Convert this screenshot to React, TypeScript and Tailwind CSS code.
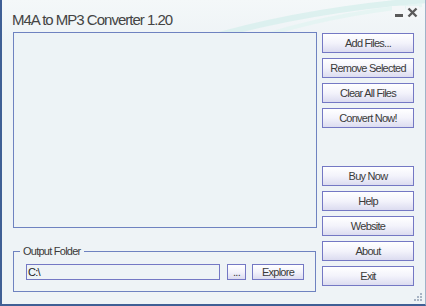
import React from "react";

const btn =
  "flex items-center justify-center border border-[#7478c4] bg-gradient-to-b from-[#ffffff] via-[#f3f3fb] to-[#dcdcf0] text-[#3a3a3a] text-[11px] tracking-[-0.75px] leading-none";

function Btn({ label }: { label: string }) {
  return <div className={`${btn} h-[20px] w-[92px]`}>{label}</div>;
}

export default function App() {
  return (
    <div
      className="relative w-[426px] h-[306px] overflow-hidden bg-[#eef3f6] border-l-2 border-b-2 border-[#3f5f95] border-r border-r-[#9fb3c8]"
      style={{ fontFamily: '"Liberation Sans", Arial, sans-serif' }}
    >
      {/* title bar background */}
      <div className="absolute inset-x-0 top-0 h-[40px] bg-gradient-to-b from-[#f4f8f9] to-[#eef3f6]" />
      <svg className="absolute left-0 top-0" width="426" height="40">
        <path d="M200 40 Q 300 10 426 0" stroke="#d7efec" strokeWidth="6" fill="none" opacity="0.8" />
        <path d="M250 40 Q 320 15 420 5" stroke="#e2f4f1" strokeWidth="4" fill="none" opacity="0.8" />
      </svg>

      <div className="relative flex h-[30px] items-start justify-between">
        <div className="pl-[10px] pt-[11px] text-[15px] leading-[18px] tracking-[-1px] text-[#444]">
          M4A to MP3 Converter 1.20
        </div>
        <div className="flex gap-[1px] pr-[6px] pt-[6px]">
          <div className="flex h-[13px] w-[13px] items-end justify-center bg-[#f4f7f8] pb-[2px]">
            <div className="h-[3px] w-[8px] bg-[#5a5a5a]" />
          </div>
          <div className="flex h-[13px] w-[13px] items-center justify-center bg-[#f4f7f8]">
            <svg width="11" height="11" viewBox="0 0 11 11">
              <path d="M1.5 1.5 L9.5 9.5 M9.5 1.5 L1.5 9.5" stroke="#5a5a5a" strokeWidth="2.4" />
            </svg>
          </div>
        </div>
      </div>

      <div className="relative flex pl-[11px] pt-[2px]">
        <div className="flex w-[304px] flex-col">
          <div className="h-[196px] w-[304px] border border-[#6e82c0] bg-[#edf3f6]" />
          <div className="relative mt-[23px] h-[41px] w-[303px] border border-[#6e82c0]">
            <div className="absolute -top-[7px] left-[6px] bg-[#eef3f6] px-[3px] text-[11px] leading-[12px] tracking-[-0.75px] text-[#3a3a3a]">
              Output Folder
            </div>
            <div className="flex items-center pl-[12px] pt-[12px]">
              <div className="flex h-[16px] w-[194px] items-center border border-[#7478c4] bg-[#eef3f6] pl-[1px] text-[11px] leading-none tracking-[-0.75px] text-[#222]">
                C:\
              </div>
              <div className={`${btn} ml-[7px] h-[16px] w-[19px]`}>...</div>
              <div className={`${btn} ml-[6px] h-[16px] w-[52px]`}>Explore</div>
            </div>
          </div>
        </div>

        <div className="ml-[5px] flex flex-col">
          <div className="flex flex-col gap-[5px] pt-[1px]">
            <Btn label="Add Files..." />
            <Btn label="Remove Selected" />
            <Btn label="Clear All Files" />
            <Btn label="Convert Now!" />
          </div>
          <div className="mt-[38px] flex flex-col gap-[5px]">
            <Btn label="Buy Now" />
            <Btn label="Help" />
            <Btn label="Website" />
            <Btn label="About" />
            <Btn label="Exit" />
          </div>
        </div>
      </div>

      {/* resize grip */}
      <svg className="absolute bottom-[2px] right-[2px]" width="10" height="10" viewBox="0 0 10 10">
        <rect x="7" y="1" width="2" height="2" fill="#a8b4c4" />
        <rect x="4" y="4" width="2" height="2" fill="#a8b4c4" />
        <rect x="7" y="4" width="2" height="2" fill="#a8b4c4" />
        <rect x="1" y="7" width="2" height="2" fill="#a8b4c4" />
        <rect x="4" y="7" width="2" height="2" fill="#a8b4c4" />
        <rect x="7" y="7" width="2" height="2" fill="#a8b4c4" />
      </svg>
    </div>
  );
}
